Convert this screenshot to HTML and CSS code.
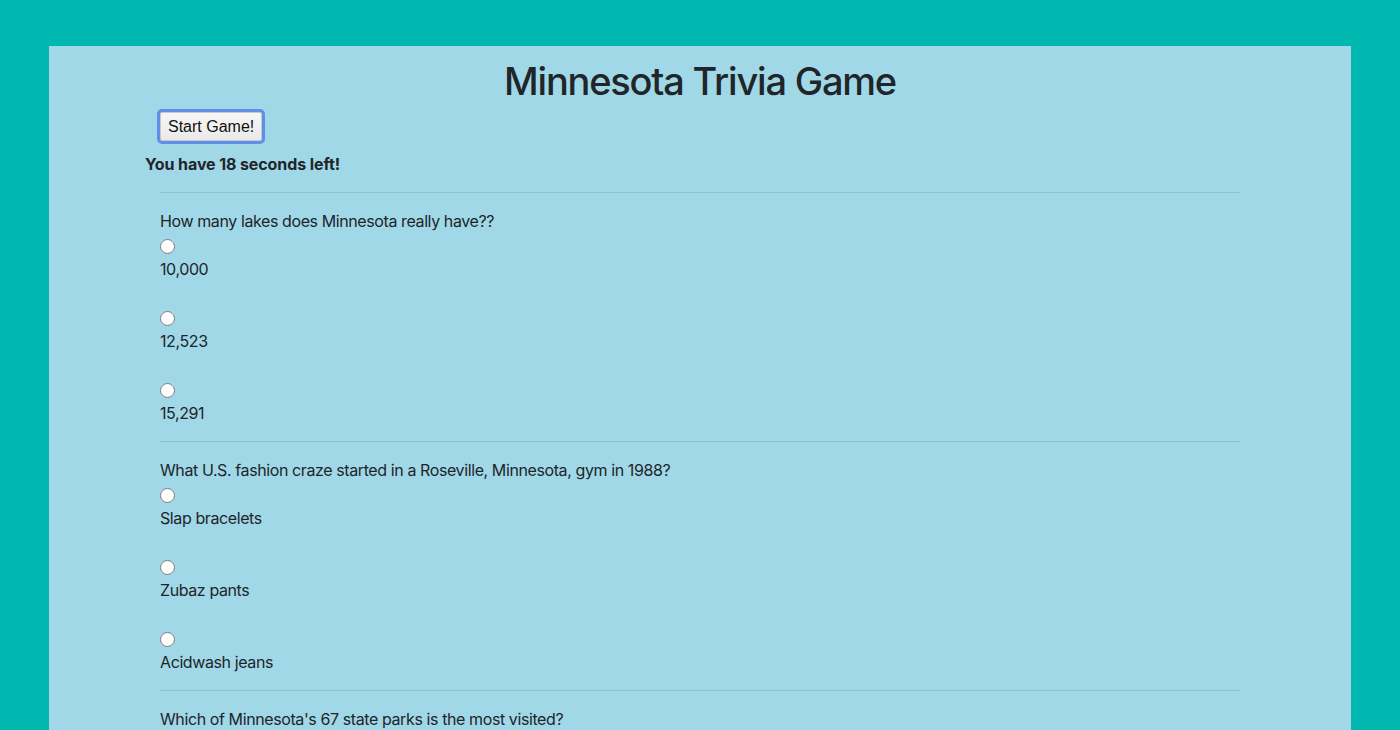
FILE: index.html
```html
<!DOCTYPE html>
<html>
<head>
<meta charset="utf-8">
<title>Minnesota Trivia Game</title>
<link rel="stylesheet" href="styles.css">
</head>
<body>
<div class="page">
  <div class="container">
    <h1 class="title">Minnesota Trivia Game</h1>
    <div class="col">
      <button class="start">Start Game!</button>
    </div>
    <div class="timer">You have 18 seconds left!</div>
    <div class="col">
      <hr class="rule">
      <div class="question">
        <p class="q">How many lakes does Minnesota really have??</p>
        <div class="opt"><div class="radio-line"><input type="radio" name="q1"></div><label>10,000</label></div>
        <div class="opt"><div class="radio-line"><input type="radio" name="q1"></div><label>12,523</label></div>
        <div class="opt"><div class="radio-line"><input type="radio" name="q1"></div><label>15,291</label></div>
      </div>
      <hr class="rule">
      <div class="question">
        <p class="q">What U.S. fashion craze started in a Roseville, Minnesota, gym in 1988?</p>
        <div class="opt"><div class="radio-line"><input type="radio" name="q2"></div><label>Slap bracelets</label></div>
        <div class="opt"><div class="radio-line"><input type="radio" name="q2"></div><label>Zubaz pants</label></div>
        <div class="opt"><div class="radio-line"><input type="radio" name="q2"></div><label>Acidwash jeans</label></div>
      </div>
      <hr class="rule">
      <div class="question">
        <p class="q">Which of Minnesota's 67 state parks is the most visited?</p>
        <div class="opt"><div class="radio-line"><input type="radio" name="q3"></div><label>Itasca State Park</label></div>
        <div class="opt"><div class="radio-line"><input type="radio" name="q3"></div><label>Gooseberry Falls State Park</label></div>
        <div class="opt"><div class="radio-line"><input type="radio" name="q3"></div><label>Fort Snelling State Park</label></div>
      </div>
    </div>
  </div>
</div>
</body>
</html>
```

FILE: styles.css
```css
html, body {
  margin: 0;
  padding: 0;
}
body {
  background: #00b8b0;
  font-family: Inter, "Noto Sans", sans-serif;
  font-size: 16px;
  line-height: 24px;
  color: #212529;
  height: 730px;
  overflow: hidden;
}
.page {
  margin: 46px 49px 0 49px;
  background: #a0d8e8;
  min-height: 1200px;
  padding-top: 11px;
}
.container {
  width: 1110px;
  margin: 0 auto;
}
.title {
  margin: 0 0 6px 0;
  font-size: 38px;
  line-height: 48px;
  font-weight: 500;
  text-align: center;
  letter-spacing: -1.2px;
}
.col {
  padding: 0 15px;
}
.start {
  font-family: "Liberation Sans", Arial, sans-serif;
  font-size: 16px;
  height: 29px;
  padding: 0 7px;
  margin: 1px 0 0 0;
  background: linear-gradient(#f7f7f7, #e9e9e9);
  border: 1px solid #c8c8c8;
  border-radius: 2px;
  outline: 3px solid #5f8fe8;
  outline-offset: 0;
  color: #111;
}
.timer {
  font-weight: 700;
  margin-top: 11px;
  letter-spacing: -0.1px;
}
.rule {
  margin: 16px 0;
  border: 0;
  border-top: 1px solid rgba(0,0,0,0.1);
}
.question {
  letter-spacing: -0.4px;
}
.q {
  margin: 0;
}
.opt {
  margin-bottom: 24px;
}
.opt:last-child {
  margin-bottom: 0;
}
.radio-line {
  height: 18px;
  padding-top: 6px;
}
.radio-line input {
  display: block;
  margin: 0;
  width: 15px;
  height: 15px;
}
.opt label {
  display: block;
}
```
